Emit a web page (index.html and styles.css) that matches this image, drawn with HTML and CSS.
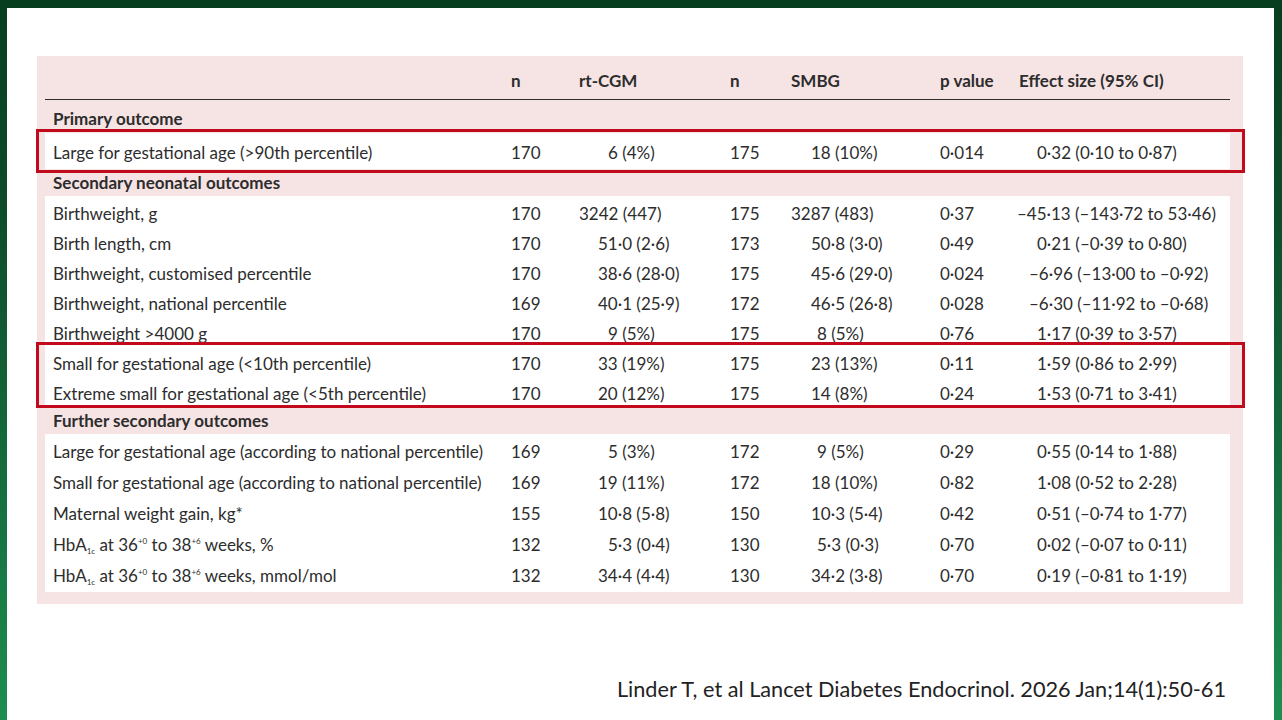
FILE: index.html
```html
<!DOCTYPE html>
<html lang="en">
<head>
<meta charset="utf-8">
<title>Outcomes table</title>
<link rel="stylesheet" href="styles.css">
</head>
<body>
<div class="slide">
  <div class="panel">
    <div class="row head">
      <div class="c-label"></div>
      <div class="c-n1">n</div>
      <div class="c-cgm">rt-CGM</div>
      <div class="c-n2">n</div>
      <div class="c-smbg">SMBG</div>
      <div class="c-p">p value</div>
      <div class="c-eff">Effect size (95% CI)</div>
    </div>

    <div class="section sec-primary">Primary outcome</div>
    <div class="block block-primary">
      <div class="row r36"><div class="c-label">Large for gestational age (&gt;90th percentile)</div><div class="c-n1">170</div><div class="c-cgm d1">6 (4%)</div><div class="c-n2">175</div><div class="c-smbg">18 (10%)</div><div class="c-p">0·014</div><div class="c-eff">0·32 (0·10 to 0·87)</div></div>
    </div>

    <div class="section sec-second">Secondary neonatal outcomes</div>
    <div class="block">
      <div class="row r30"><div class="c-label">Birthweight, g</div><div class="c-n1">170</div><div class="c-cgm d4">3242 (447)</div><div class="c-n2">175</div><div class="c-smbg d4">3287 (483)</div><div class="c-p">0·37</div><div class="c-eff neg2">–45·13 (–143·72 to 53·46)</div></div>
      <div class="row r30"><div class="c-label">Birth length, cm</div><div class="c-n1">170</div><div class="c-cgm">51·0 (2·6)</div><div class="c-n2">173</div><div class="c-smbg">50·8 (3·0)</div><div class="c-p">0·49</div><div class="c-eff">0·21 (–0·39 to 0·80)</div></div>
      <div class="row r30"><div class="c-label">Birthweight, customised percentile</div><div class="c-n1">170</div><div class="c-cgm">38·6 (28·0)</div><div class="c-n2">175</div><div class="c-smbg">45·6 (29·0)</div><div class="c-p">0·024</div><div class="c-eff neg">–6·96 (–13·00 to –0·92)</div></div>
      <div class="row r30"><div class="c-label">Birthweight, national percentile</div><div class="c-n1">169</div><div class="c-cgm">40·1 (25·9)</div><div class="c-n2">172</div><div class="c-smbg">46·5 (26·8)</div><div class="c-p">0·028</div><div class="c-eff neg">–6·30 (–11·92 to –0·68)</div></div>
      <div class="row r30"><div class="c-label">Birthweight &gt;4000 g</div><div class="c-n1">170</div><div class="c-cgm d1">9 (5%)</div><div class="c-n2">175</div><div class="c-smbg d1">8 (5%)</div><div class="c-p">0·76</div><div class="c-eff">1·17 (0·39 to 3·57)</div></div>
      <div class="row r30"><div class="c-label">Small for gestational age (&lt;10th percentile)</div><div class="c-n1">170</div><div class="c-cgm">33 (19%)</div><div class="c-n2">175</div><div class="c-smbg">23 (13%)</div><div class="c-p">0·11</div><div class="c-eff">1·59 (0·86 to 2·99)</div></div>
      <div class="row r30"><div class="c-label">Extreme small for gestational age (&lt;5th percentile)</div><div class="c-n1">170</div><div class="c-cgm">20 (12%)</div><div class="c-n2">175</div><div class="c-smbg">14 (8%)</div><div class="c-p">0·24</div><div class="c-eff">1·53 (0·71 to 3·41)</div></div>
    </div>

    <div class="section sec-further">Further secondary outcomes</div>
    <div class="block block-further">
      <div class="row r31"><div class="c-label">Large for gestational age (according to national percentile)</div><div class="c-n1">169</div><div class="c-cgm d1">5 (3%)</div><div class="c-n2">172</div><div class="c-smbg d1">9 (5%)</div><div class="c-p">0·29</div><div class="c-eff">0·55 (0·14 to 1·88)</div></div>
      <div class="row r31"><div class="c-label">Small for gestational age (according to national percentile)</div><div class="c-n1">169</div><div class="c-cgm">19 (11%)</div><div class="c-n2">172</div><div class="c-smbg">18 (10%)</div><div class="c-p">0·82</div><div class="c-eff">1·08 (0·52 to 2·28)</div></div>
      <div class="row r31"><div class="c-label">Maternal weight gain, kg*</div><div class="c-n1">155</div><div class="c-cgm">10·8 (5·8)</div><div class="c-n2">150</div><div class="c-smbg">10·3 (5·4)</div><div class="c-p">0·42</div><div class="c-eff">0·51 (–0·74 to 1·77)</div></div>
      <div class="row r31"><div class="c-label">HbA<sub>1c</sub> at 36<sup>+0</sup> to 38<sup>+6</sup> weeks, %</div><div class="c-n1">132</div><div class="c-cgm d1">5·3 (0·4)</div><div class="c-n2">130</div><div class="c-smbg d1">5·3 (0·3)</div><div class="c-p">0·70</div><div class="c-eff">0·02 (–0·07 to 0·11)</div></div>
      <div class="row r31"><div class="c-label">HbA<sub>1c</sub> at 36<sup>+0</sup> to 38<sup>+6</sup> weeks, mmol/mol</div><div class="c-n1">132</div><div class="c-cgm">34·4 (4·4)</div><div class="c-n2">130</div><div class="c-smbg">34·2 (3·8)</div><div class="c-p">0·70</div><div class="c-eff">0·19 (–0·81 to 1·19)</div></div>
    </div>

    <div class="highlight hl-primary"></div>
    <div class="highlight hl-small"></div>
  </div>
  <div class="citation">Linder T, et al Lancet Diabetes Endocrinol. 2026 Jan;14(1):50-61</div>
</div>
</body>
</html>
```

FILE: styles.css
```css
html, body {
  margin: 0;
  padding: 0;
}
body {
  width: 1282px;
  height: 720px;
  overflow: hidden;
  background: linear-gradient(180deg, #083e20 0%, #0d4c2b 30%, #16703f 70%, #1d8e50 100%);
  font-family: Lato, "Open Sans", sans-serif;
  color: #2d2d2d;
}
.slide {
  margin: 8px 8px 0 7px;
  height: 712px;
  background: #ffffff;
  display: flex;
  flex-direction: column;
}
.panel {
  position: relative;
  margin: 48px 0 0 30px;
  width: 1206px;
  box-sizing: border-box;
  padding: 0 13px 12px 8px;
  background: #f6e3e3;
}
.row {
  display: grid;
  grid-template-columns: 466px 57px 120px 102px 110px 100px 230px;
  align-items: center;
  font-size: 17px;
  line-height: 18px;
  white-space: nowrap;
  box-sizing: border-box;
}
.c-label { padding-left: 8px; }
.c-n1 { padding-left: 0; }
.c-cgm { padding-left: 30px; }
.c-cgm.d1 { padding-left: 40px; }
.c-cgm.d4 { padding-left: 11px; }
.c-n2 { padding-left: 42px; }
.c-smbg { padding-left: 21px; }
.c-smbg.d1 { padding-left: 27px; }
.c-smbg.d4 { padding-left: 1px; }
.c-p { padding-left: 40px; }
.c-eff { padding-left: 37px; }
.c-eff.neg { padding-left: 29px; }
.c-eff.neg2 { padding-left: 17px; }

.head {
  height: 44px;
  align-items: end;
  padding-bottom: 9px;
  border-bottom: 1px solid #2e2e2e;
  font-weight: 700;
}
.head .c-cgm { padding-left: 11px; }
.head .c-smbg { padding-left: 1px; }
.head .c-eff { padding-left: 19px; }

.section {
  font-size: 17px;
  line-height: 18px;
  font-weight: 700;
  padding-left: 8px;
  display: flex;
  align-items: center;
  box-sizing: border-box;
}
.sec-primary { height: 33px; padding-top: 4px; }
.sec-second { height: 27px; padding-top: 1px; }
.sec-further { height: 28px; padding-top: 1px; }

.block { background: #ffffff; }
.block-further { padding-bottom: 3px; }
.r36 { height: 36px; padding-top: 4px; }
.r30 { height: 30px; padding-top: 5px; }
.r31 { height: 31px; padding-top: 4px; }

sub, sup {
  font-size: 8px;
  line-height: 0;
}
sub { vertical-align: -3px; }
sup { vertical-align: 7px; }

.highlight {
  position: absolute;
  left: -1px;
  width: 1209px;
  box-sizing: border-box;
  border: 3px solid #c20a1d;
}
.hl-primary { top: 73px; height: 44px; }
.hl-small { top: 286px; height: 66px; }

.citation {
  margin-top: 75px;
  padding-right: 48px;
  text-align: right;
  font-family: Lato, "Open Sans", sans-serif;
  font-size: 21.7px;
  line-height: 20px;
  color: #222222;
}
```
